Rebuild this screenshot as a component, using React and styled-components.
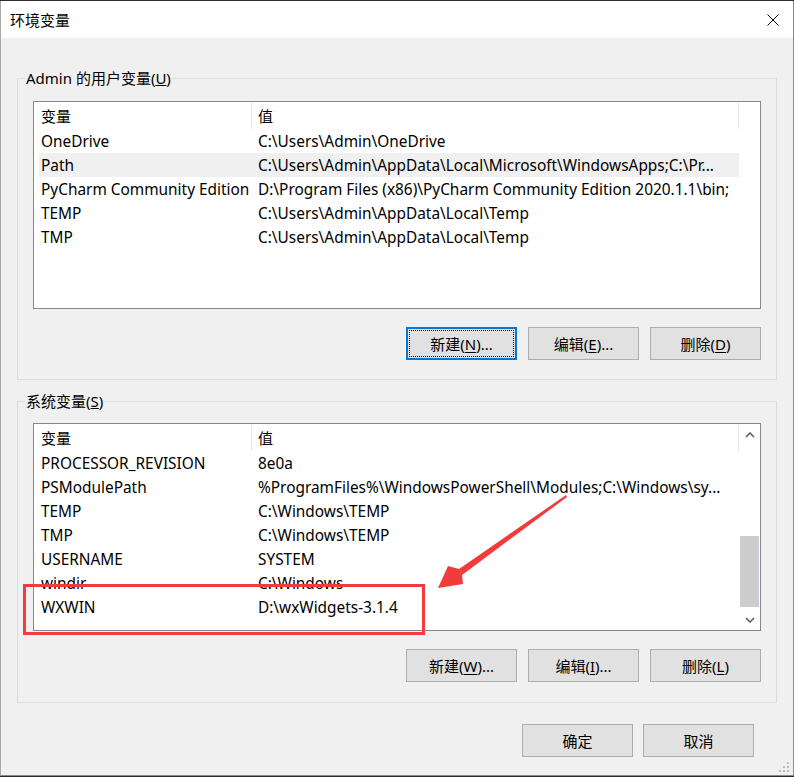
import React from 'react'
import styled, { createGlobalStyle } from 'styled-components'

const GlobalStyle = createGlobalStyle`
  html, body {
    margin: 0;
    padding: 0;
    background: #2f2b28;
  }
  body {
    font-family: "Noto Sans", "Noto Sans CJK SC", sans-serif;
    font-size: 15px;
    color: #000;
  }
`

const Page = styled.div`
  position: relative;
  width: 794px;
  height: 777px;
  padding-top: 1px;
  box-sizing: border-box;
`

const Window = styled.div`
  width: 794px;
  height: 775px;
  box-sizing: border-box;
  border-left: 1px solid #a8a8a8;
  border-right: 1px solid #8c8c8c;
  border-bottom: 1px solid #8c8c8c;
  background: #f0f0f0;
  display: flex;
  flex-direction: column;
`

const TitleBar = styled.div`
  height: 37px;
  flex: none;
  background: #fff;
  display: flex;
  align-items: center;
  justify-content: space-between;
  padding: 0 14px 0 9px;
`

const Title = styled.span`
  font-size: 15px;
  line-height: 20px;
`

const Client = styled.div`
  flex: 1;
  display: flex;
  flex-direction: column;
  padding: 30px 16px 0 16px;
`

const Group = styled.fieldset`
  margin: ${p => (p.$first ? '0' : '11px')} 0 0 0;
  border: 1px solid #dcdcdc;
  padding: ${p => (p.$first ? '13px' : '12px')} 15px ${p => (p.$first ? '19px' : '20px')} 15px;
  min-width: 0;
`

const Legend = styled.legend`
  padding: 0 1px;
  margin-left: -8px;
  line-height: 20px;
  font-size: 15px;
`

const ListView = styled.div`
  height: 208px;
  box-sizing: border-box;
  border: 1px solid #828790;
  background: #fff;
  display: flex;
  overflow: hidden;
`

const ListBody = styled.div`
  flex: 1;
  display: flex;
  flex-direction: column;
`

const Header = styled.div`
  height: 27px;
  display: flex;
  flex: none;
`

const HeaderCell = styled.div`
  width: ${p => p.$w}px;
  padding-left: ${p => p.$pad}px;
  box-sizing: border-box;
  border-right: 1px solid #e5e5e5;
  margin-top: 1px;
  line-height: 26px;
  white-space: nowrap;
`

const HeaderFill = styled.div`
  flex: 1;
`

const Row = styled.div`
  display: grid;
  grid-template-columns: 213px 487px;
  width: 700px;
  margin-left: 5px;
  height: 24px;
  line-height: 25px;
  font-size: 15.4px;
  background: ${p => (p.$selected ? '#f0f0f0' : 'transparent')};
`

const Cell = styled.div`
  padding-left: ${p => p.$pad}px;
  white-space: nowrap;
  overflow: hidden;
`

const ScrollBar = styled.div`
  width: 21px;
  flex: none;
  display: flex;
  flex-direction: column;
  background: #fff;
`

const ScrollArrow = styled.div`
  height: 21px;
  flex: none;
  display: flex;
  align-items: center;
  justify-content: center;
`

const Thumb = styled.div`
  margin: auto 1px 2px 1px;
  height: 71px;
  background: #cdcdcd;
`

const ButtonRow = styled.div`
  display: flex;
  justify-content: flex-end;
  gap: ${p => p.$gap || 11}px;
  margin-top: ${p => p.$top || 18}px;
  padding-right: ${p => p.$right || 0}px;
`

const Button = styled.button`
  width: 111px;
  height: 33px;
  box-sizing: border-box;
  background: #e1e1e1;
  border: ${p => (p.$focused ? '2px solid #0078d7' : '1px solid #adadad')};
  outline: ${p => (p.$focused ? '1px dotted #000' : 'none')};
  outline-offset: -4px;
  font-family: "Noto Sans", "Noto Sans CJK SC", sans-serif;
  font-size: 15px;
  color: #000;
  padding: 0;
  u {
    text-underline-offset: 2px;
  }
`

const RedBox = styled.div`
  position: absolute;
  left: 23px;
  top: 584px;
  width: 402px;
  height: 51px;
  box-sizing: border-box;
  border: 3px solid #f33b3b;
  pointer-events: none;
`

const Overlay = styled.svg`
  position: absolute;
  left: 0;
  top: 0;
  pointer-events: none;
`

const userVars = [
  ['OneDrive', 'C:\\Users\\Admin\\OneDrive'],
  ['Path', 'C:\\Users\\Admin\\AppData\\Local\\Microsoft\\WindowsApps;C:\\Pr...', true],
  ['PyCharm Community Edition', 'D:\\Program Files (x86)\\PyCharm Community Edition 2020.1.1\\bin;'],
  ['TEMP', 'C:\\Users\\Admin\\AppData\\Local\\Temp'],
  ['TMP', 'C:\\Users\\Admin\\AppData\\Local\\Temp'],
]

const sysVars = [
  ['PROCESSOR_REVISION', '8e0a'],
  ['PSModulePath', '%ProgramFiles%\\WindowsPowerShell\\Modules;C:\\Windows\\sy...'],
  ['TEMP', 'C:\\Windows\\TEMP'],
  ['TMP', 'C:\\Windows\\TEMP'],
  ['USERNAME', 'SYSTEM'],
  ['windir', 'C:\\Windows'],
  ['WXWIN', 'D:\\wxWidgets-3.1.4'],
]

function VarList({ rows, scroll }) {
  return (
    <ListView>
      <ListBody>
        <Header>
          <HeaderCell $w={218} $pad={7}>变量</HeaderCell>
          <HeaderCell $w={487} $pad={6}>值</HeaderCell>
          <HeaderFill />
        </Header>
        {rows.map(([name, value, sel]) => (
          <Row key={name + value} $selected={sel}>
            <Cell $pad={2}>{name}</Cell>
            <Cell $pad={6}>{value}</Cell>
          </Row>
        ))}
      </ListBody>
      {scroll && (
        <ScrollBar>
          <ScrollArrow>
            <svg width="10" height="6" viewBox="0 0 10 6">
              <path d="M1 5 L5 1 L9 5" fill="none" stroke="#606060" strokeWidth="1.6" />
            </svg>
          </ScrollArrow>
          <Thumb />
          <ScrollArrow>
            <svg width="10" height="6" viewBox="0 0 10 6">
              <path d="M1 1 L5 5 L9 1" fill="none" stroke="#606060" strokeWidth="1.6" />
            </svg>
          </ScrollArrow>
        </ScrollBar>
      )}
    </ListView>
  )
}

export default function App() {
  return (
    <Page>
      <GlobalStyle />
      <Window>
        <TitleBar>
          <Title>环境变量</Title>
          <svg width="12" height="12" viewBox="0 0 12 12">
            <path d="M0.5 0.5 L11.5 11.5 M11.5 0.5 L0.5 11.5" stroke="#000" strokeWidth="1" />
          </svg>
        </TitleBar>
        <Client>
          <Group $first>
            <Legend>Admin 的用户变量(<u>U</u>)</Legend>
            <VarList rows={userVars} />
            <ButtonRow>
              <Button $focused>新建(<u>N</u>)...</Button>
              <Button>编辑(<u>E</u>)...</Button>
              <Button>删除(<u>D</u>)</Button>
            </ButtonRow>
          </Group>
          <Group>
            <Legend>系统变量(<u>S</u>)</Legend>
            <VarList rows={sysVars} scroll />
            <ButtonRow>
              <Button>新建(<u>W</u>)...</Button>
              <Button>编辑(<u>I</u>)...</Button>
              <Button>删除(<u>L</u>)</Button>
            </ButtonRow>
          </Group>
          <ButtonRow $top={21} $gap={10} $right={23}>
            <Button>确定</Button>
            <Button>取消</Button>
          </ButtonRow>
        </Client>
      </Window>
      <RedBox />
      <Overlay width="794" height="777" viewBox="0 0 794 777">
        <polygon
          points="566,495 459,569 448,566 438,588 463,584 462,575 567,497"
          fill="#f33b3b"
        />
        <g fill="#bdbdbd">
          <rect x="787" y="762" width="2" height="2" />
          <rect x="783" y="766" width="2" height="2" />
          <rect x="787" y="766" width="2" height="2" />
          <rect x="779" y="770" width="2" height="2" />
          <rect x="783" y="770" width="2" height="2" />
          <rect x="787" y="770" width="2" height="2" />
        </g>
      </Overlay>
    </Page>
  )
}
